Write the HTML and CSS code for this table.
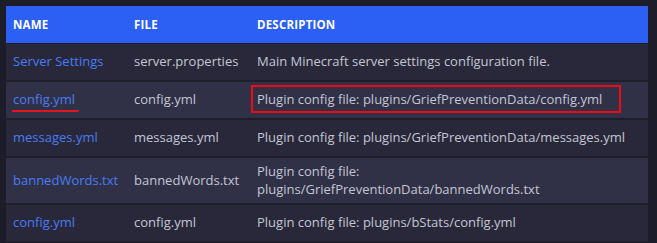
FILE: index.html
```html
<!DOCTYPE html>
<html lang="en">
<head>
<meta charset="utf-8">
<title>Plugin files</title>
<link rel="stylesheet" href="styles.css">
</head>
<body>
<table class="files">
  <colgroup>
    <col class="col-name">
    <col class="col-file">
    <col class="col-desc">
  </colgroup>
  <thead>
    <tr><th>Name</th><th>File</th><th>Description</th></tr>
  </thead>
  <tbody>
    <tr>
      <td><a class="link" href="#">Server Settings</a></td>
      <td>server.properties</td>
      <td>Main Minecraft server settings configuration file.</td>
    </tr>
    <tr>
      <td><a class="link mark-line" href="#">config.yml</a></td>
      <td>config.yml</td>
      <td><span class="mark-box">Plugin config file: plugins/GriefPreventionData/config.yml</span></td>
    </tr>
    <tr>
      <td><a class="link" href="#">messages.yml</a></td>
      <td>messages.yml</td>
      <td>Plugin config file: plugins/GriefPreventionData/messages.yml</td>
    </tr>
    <tr>
      <td><a class="link" href="#">bannedWords.txt</a></td>
      <td>bannedWords.txt</td>
      <td>Plugin config file: plugins/GriefPreventionData/bannedWords.txt</td>
    </tr>
    <tr>
      <td><a class="link" href="#">config.yml</a></td>
      <td>config.yml</td>
      <td>Plugin config file: plugins/bStats/config.yml</td>
    </tr>
  </tbody>
</table>
</body>
</html>
```

FILE: styles.css
```css
html, body {
  margin: 0;
  background: #1d1d2a;
}

body {
  padding: 6px 9px 0 6px;
  font-family: "Open Sans", "Noto Sans", sans-serif;
  font-size: 13px;
  color: #c4c6d3;
}

.files {
  width: 642px;
  border-collapse: collapse;
  table-layout: fixed;
}

.col-name { width: 121px; }
.col-file { width: 123px; }
.col-desc { width: 398px; }

.files th {
  height: 37px;
  padding: 0 7px;
  background: #2c60f5;
  color: #ffffff;
  font-size: 11.5px;
  font-weight: 700;
  text-transform: uppercase;
  text-align: left;
  letter-spacing: 0.2px;
  border-bottom: 1px solid #1f1f2c;
}

.files td {
  height: 26px;
  padding: 5px 7px;
  line-height: 17.5px;
  vertical-align: middle;
  border-bottom: 2px solid #1f1f2c;
}

.files tbody tr:nth-child(odd) td { background: #28283a; }
.files tbody tr:nth-child(even) td { background: #303046; }

.link {
  color: #4a7cf2;
  text-decoration: none;
}

/* red annotation marks drawn over the text */
.mark-line,
.mark-box {
  position: relative;
}

.mark-line::after {
  content: "";
  position: absolute;
  left: -1px;
  right: -4px;
  bottom: -4px;
  height: 2px;
  background: #e0141c;
}

.mark-box::after {
  content: "";
  position: absolute;
  top: -5px;
  bottom: -5px;
  left: -6px;
  right: -19px;
  border: 2px solid #ee0a14;
}
```
